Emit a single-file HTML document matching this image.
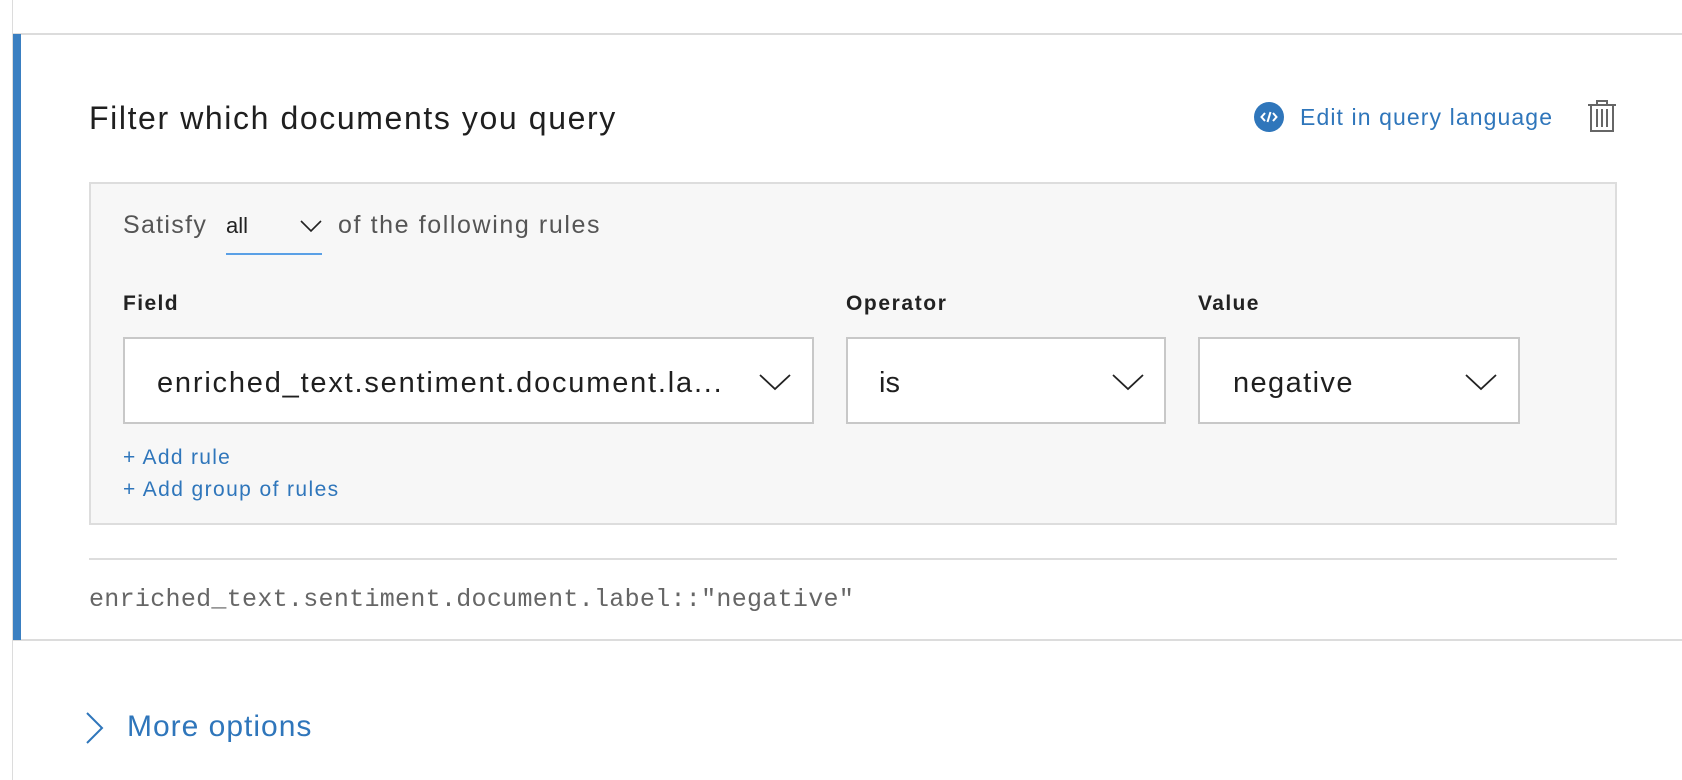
<!DOCTYPE html>
<html><head><style>
*{margin:0;padding:0;box-sizing:border-box}
body{width:1682px;height:780px;background:#fff;position:relative;overflow:hidden;font-family:"Liberation Sans",sans-serif;color:#1f1f1f}
.a{position:absolute;white-space:nowrap}
.blue{color:#2f76bb}
</style></head><body>
<div class="a" style="left:12px;top:0;width:1px;height:780px;background:#dcdcdc"></div>
<div class="a" style="left:12px;top:33px;width:1670px;height:2px;background:#dcdcdc"></div>
<div class="a" style="left:12px;top:639px;width:1670px;height:2px;background:#dcdcdc"></div>
<div class="a" style="left:13px;top:34px;width:8px;height:606px;background:#3a7fc1"></div>

<div class="a" style="left:89px;top:100px;font-size:32px;letter-spacing:1.6px;line-height:36px;color:#1f1f1f">Filter which documents you query</div>

<svg class="a" style="left:1254px;top:102px" width="30" height="30" viewBox="0 0 30 30"><circle cx="15" cy="15" r="15" fill="#2f76bb"/><path d="M11 11 L7.5 15 L11 19 M19 11 L22.5 15 L19 19 M16.5 10 L13.5 20" stroke="#fff" stroke-width="2" fill="none"/></svg>
<div class="a blue" style="left:1300px;top:103px;font-size:23px;letter-spacing:1.1px;line-height:28px">Edit in query language</div>
<svg class="a" style="left:1586px;top:99px" width="32" height="34" viewBox="0 0 32 34"><path d="M2 6 H30 M11 6 V2 H21 V6 M5 6 V32 H27 V6 M11 10 V28 M16 10 V28 M21 10 V28" stroke="#666" stroke-width="2" fill="none"/></svg>

<div class="a" style="left:89px;top:182px;width:1528px;height:343px;background:#f7f7f7;border:2px solid #dddddd"></div>
<div class="a" style="left:123px;top:210px;font-size:25px;letter-spacing:1.3px;line-height:30px;color:#555">Satisfy</div>
<div class="a" style="left:226px;top:212px;font-size:22px;line-height:28px;color:#222">all</div>
<svg class="a" style="left:300px;top:219px" width="22" height="14" viewBox="0 0 22 14"><path d="M1 2 L11 12 L21 2" stroke="#222" stroke-width="1.6" fill="none"/></svg>
<div class="a" style="left:226px;top:253px;width:96px;height:2px;background:#5aa0e6"></div>
<div class="a" style="left:338px;top:210px;font-size:25px;letter-spacing:1.6px;line-height:30px;color:#555">of the following rules</div>

<div class="a" style="left:123px;top:291px;font-size:21px;font-weight:bold;letter-spacing:1.4px;line-height:26px;color:#222">Field</div>
<div class="a" style="left:846px;top:291px;font-size:21px;font-weight:bold;letter-spacing:1.6px;line-height:26px;color:#222">Operator</div>
<div class="a" style="left:1198px;top:291px;font-size:21px;font-weight:bold;letter-spacing:1.4px;line-height:26px;color:#222">Value</div>

<div class="a" style="left:123px;top:337px;width:691px;height:87px;background:#fff;border:2px solid #c8c8c8"></div>
<div class="a" style="left:157px;top:366px;font-size:29px;letter-spacing:1.8px;line-height:34px;color:#1f1f1f">enriched_text.sentiment.document.la...</div>
<svg class="a" style="left:759px;top:373px" width="32" height="18" viewBox="0 0 32 18"><path d="M1 2 L16 16 L31 2" stroke="#222" stroke-width="1.8" fill="none"/></svg>

<div class="a" style="left:846px;top:337px;width:320px;height:87px;background:#fff;border:2px solid #c8c8c8"></div>
<div class="a" style="left:879px;top:366px;font-size:29px;line-height:34px">is</div>
<svg class="a" style="left:1112px;top:373px" width="32" height="18" viewBox="0 0 32 18"><path d="M1 2 L16 16 L31 2" stroke="#222" stroke-width="1.8" fill="none"/></svg>

<div class="a" style="left:1198px;top:337px;width:322px;height:87px;background:#fff;border:2px solid #c8c8c8"></div>
<div class="a" style="left:1233px;top:366px;font-size:29px;letter-spacing:1.4px;line-height:34px">negative</div>
<svg class="a" style="left:1465px;top:373px" width="32" height="18" viewBox="0 0 32 18"><path d="M1 2 L16 16 L31 2" stroke="#222" stroke-width="1.8" fill="none"/></svg>

<div class="a blue" style="left:123px;top:445px;font-size:21px;letter-spacing:1.3px;line-height:26px">+ Add rule</div>
<div class="a blue" style="left:123px;top:477px;font-size:21px;letter-spacing:1.4px;line-height:26px">+ Add group of rules</div>

<div class="a" style="left:89px;top:558px;width:1528px;height:2px;background:#dddddd"></div>
<div class="a" style="left:89px;top:585px;font-family:'Liberation Mono',monospace;font-size:25px;letter-spacing:0.3px;line-height:30px;color:#666">enriched_text.sentiment.document.label::"negative"</div>

<svg class="a" style="left:85px;top:712px" width="20" height="32" viewBox="0 0 20 32"><path d="M2 1 L17 16 L2 31" stroke="#2f76bb" stroke-width="2" fill="none"/></svg>
<div class="a blue" style="left:127px;top:709px;font-size:30px;letter-spacing:1px;line-height:36px">More options</div>
</body></html>
